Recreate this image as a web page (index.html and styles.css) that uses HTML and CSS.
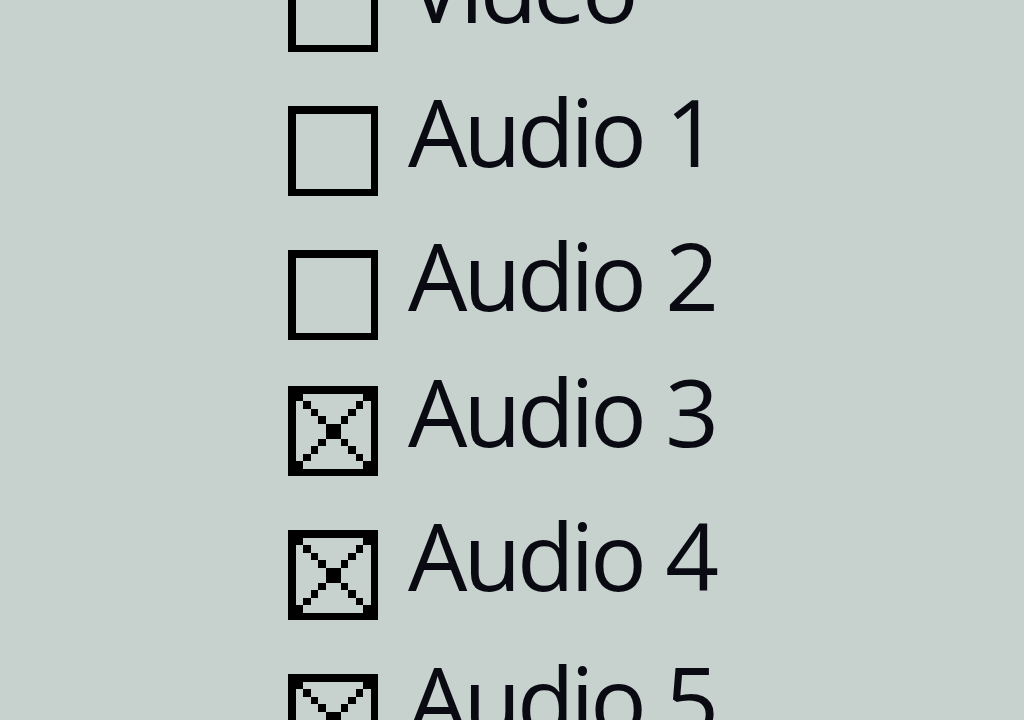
FILE: index.html
```html
<!DOCTYPE html>
<html lang="en">
<head>
<meta charset="utf-8">
<title>Track selection</title>
<link rel="stylesheet" href="styles.css">
</head>
<body>
<div class="tracks">
  <div class="row">
    <svg class="box" viewBox="0 0 12 12" shape-rendering="crispEdges"><path d="M0 0h12v12H0zM1 1v10h10V1z" fill-rule="evenodd"/></svg>
    <span class="label">Video</span>
  </div>
  <div class="row">
    <svg class="box" viewBox="0 0 12 12" shape-rendering="crispEdges"><path d="M0 0h12v12H0zM1 1v10h10V1z" fill-rule="evenodd"/></svg>
    <span class="label">Audio 1</span>
  </div>
  <div class="row row-short">
    <svg class="box" viewBox="0 0 12 12" shape-rendering="crispEdges"><path d="M0 0h12v12H0zM1 1v10h10V1z" fill-rule="evenodd"/></svg>
    <span class="label">Audio 2</span>
  </div>
  <div class="row">
    <svg class="box" viewBox="0 0 12 12" shape-rendering="crispEdges"><path d="M0 0h12v12H0zM1 1v10h10V1z" fill-rule="evenodd"/><path d="M1 1h1v1H1zM10 1h1v1h-1zM1 10h1v1H1zM10 10h1v1h-1zM2 2h1v1H2zM3 3h1v1H3zM4 4h1v1H4zM5 5h2v2H5zM7 7h1v1H7zM8 8h1v1H8zM9 9h1v1H9zM9 2h1v1H9zM8 3h1v1H8zM7 4h1v1H7zM4 7h1v1H4zM3 8h1v1H3zM2 9h1v1H2z"/></svg>
    <span class="label">Audio 3</span>
  </div>
  <div class="row">
    <svg class="box" viewBox="0 0 12 12" shape-rendering="crispEdges"><path d="M0 0h12v12H0zM1 1v10h10V1z" fill-rule="evenodd"/><path d="M1 1h1v1H1zM10 1h1v1h-1zM1 10h1v1H1zM10 10h1v1h-1zM2 2h1v1H2zM3 3h1v1H3zM4 4h1v1H4zM5 5h2v2H5zM7 7h1v1H7zM8 8h1v1H8zM9 9h1v1H9zM9 2h1v1H9zM8 3h1v1H8zM7 4h1v1H7zM4 7h1v1H4zM3 8h1v1H3zM2 9h1v1H2z"/></svg>
    <span class="label">Audio 4</span>
  </div>
  <div class="row">
    <svg class="box" viewBox="0 0 12 12" shape-rendering="crispEdges"><path d="M0 0h12v12H0zM1 1v10h10V1z" fill-rule="evenodd"/><path d="M1 1h1v1H1zM10 1h1v1h-1zM1 10h1v1H1zM10 10h1v1h-1zM2 2h1v1H2zM3 3h1v1H3zM4 4h1v1H4zM5 5h2v2H5zM7 7h1v1H7zM8 8h1v1H8zM9 9h1v1H9zM9 2h1v1H9zM8 3h1v1H8zM7 4h1v1H7zM4 7h1v1H4zM3 8h1v1H3zM2 9h1v1H2z"/></svg>
    <span class="label">Audio 5</span>
  </div>
</div>
</body>
</html>
```

FILE: styles.css
```css
html, body {
  margin: 0;
  padding: 0;
  background: #c7d1cd;
  width: 1024px;
  height: 720px;
  overflow: hidden;
}

.tracks {
  display: flex;
  flex-direction: column;
  margin-top: -38px;
  padding-left: 288px;
}

.row {
  display: flex;
  align-items: flex-start;
  gap: 30px;
  height: 144px;
  flex: none;
}

.row-short {
  height: 136px;
}

.box {
  width: 90px;
  height: 90px;
  flex: none;
  fill: #000;
}

.label {
  font-family: "Open Sans", "Noto Sans", sans-serif;
  font-size: 94px;
  line-height: 90px;
  height: 90px;
  margin-top: -20px;
  letter-spacing: -4px;
  word-spacing: 2px;
  color: #0a0a12;
  white-space: nowrap;
}
```
